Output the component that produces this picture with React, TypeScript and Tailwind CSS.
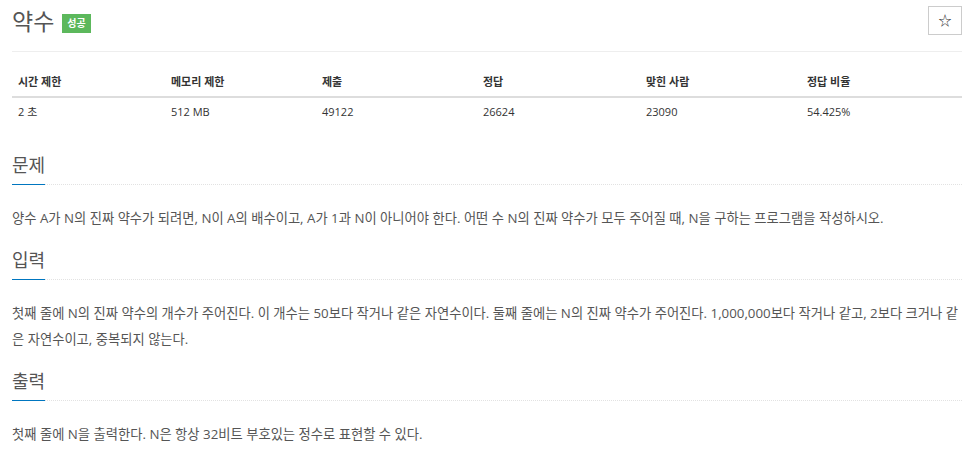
import React from "react";

const font = { fontFamily: '"Open Sans", "Noto Sans CJK KR", sans-serif' };

function Heading({ children, first }: { children: React.ReactNode; first?: boolean }) {
  return (
    <div className={`${first ? "mt-[27px]" : "mt-[18px]"} border-b border-dotted border-[#e2e2e2]`}>
      <h2 className="inline-block text-[18px] leading-[22px] pb-[8px] text-[#555] border-b border-[#0076c0] -mb-px font-normal">
        {children}
      </h2>
    </div>
  );
}

export default function App() {
  const cols = ["153px", "151px", "161px", "163px", "161px", "161px"];
  const heads = ["시간 제한", "메모리 제한", "제출", "정답", "맞힌 사람", "정답 비율"];
  const vals = ["2 초", "512 MB", "49122", "26624", "23090", "54.425%"];
  return (
    <div className="w-[972px] h-[458px] bg-white pl-[12px] pr-[10px] overflow-hidden" style={font}>
      <div className="h-[52px] border-b border-[#eee] flex items-start justify-between">
        <div className="flex items-center mt-[7px]">
          <h1 className="text-[23px] leading-[28px] text-[#555] font-normal">약수</h1>
          <span className="ml-[8px] mt-[4px] h-[19px] px-[5px] bg-[#5cb85c] text-white text-[10px] font-bold leading-[19px]">성공</span>
        </div>
        <button className="mt-[6px] w-[34px] h-[29px] border border-[#ccc] bg-white flex items-center justify-center text-[13px] text-[#333]">
          ☆
        </button>
      </div>
      <div className="mt-[16px]">
        <div className="flex h-[30px] items-center border-b-2 border-[#ddd] text-[11px] font-bold text-[#333]">
          {heads.map((h, i) => (
            <div key={i} style={{ width: cols[i] }} className="pl-[6px]">{h}</div>
          ))}
        </div>
        <div className="flex h-[29px] items-center text-[11px] text-[#333]">
          {vals.map((h, i) => (
            <div key={i} style={{ width: cols[i] }} className="pl-[6px]">{h}</div>
          ))}
        </div>
      </div>
      <Heading first>문제</Heading>
      <p className="mt-[20px] text-[13.3px] leading-[26px] text-[#555]">
        양수 A가 N의 진짜 약수가 되려면, N이 A의 배수이고, A가 1과 N이 아니어야 한다. 어떤 수 N의 진짜 약수가 모두 주어질 때, N을 구하는 프로그램을 작성하시오.
      </p>
      <Heading>입력</Heading>
      <p className="mt-[20px] text-[13.3px] leading-[26px] text-[#555]">
        첫째 줄에 N의 진짜 약수의 개수가 주어진다. 이 개수는 50보다 작거나 같은 자연수이다. 둘째 줄에는 N의 진짜 약수가 주어진다. 1,000,000보다 작거나 같고, 2보다 크거나 같은 자연수이고, 중복되지 않는다.
      </p>
      <Heading>출력</Heading>
      <p className="mt-[20px] text-[13.3px] leading-[26px] text-[#555]">
        첫째 줄에 N을 출력한다. N은 항상 32비트 부호있는 정수로 표현할 수 있다.
      </p>
    </div>
  );
}
